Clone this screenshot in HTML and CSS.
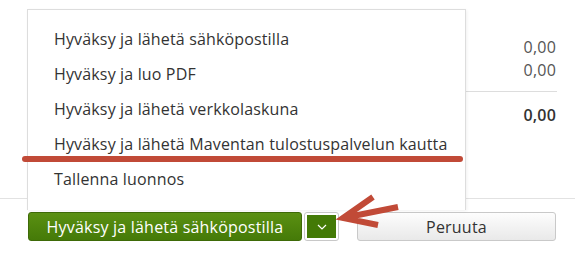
FILE: index.html
```html
<!DOCTYPE html>
<html lang="fi">
<head>
<meta charset="utf-8">
<title>Hyväksy</title>
<link rel="stylesheet" href="styles.css">
</head>
<body>
<div class="page">
  <div class="totals">
    <div class="row">0,00</div>
    <div class="row">0,00</div>
    <div class="sep"></div>
    <div class="row total">0,00</div>
  </div>
  <div class="footer">
    <div class="split">
      <button class="btn primary">Hyväksy ja lähetä sähköpostilla</button>
      <button class="btn caret"><span class="caret-inner"><svg width="10" height="6" viewBox="0 0 10 6"><path d="M1 1 L5 5 L9 1" fill="none" stroke="#fff" stroke-width="1.2"/></svg></span></button>
    </div>
    <button class="btn cancel">Peruuta</button>
  </div>
  <ul class="menu">
    <li>Hyväksy ja lähetä sähköpostilla</li>
    <li>Hyväksy ja luo PDF</li>
    <li>Hyväksy ja lähetä verkkolaskuna</li>
    <li>Hyväksy ja lähetä Maventan tulostuspalvelun kautta</li>
    <li>Tallenna luonnos</li>
  </ul>
  <svg class="annot" width="575" height="256" viewBox="0 0 575 256">
    <line x1="25" y1="159" x2="460" y2="159" stroke="#c14a37" stroke-width="6" stroke-linecap="round"/>
    <path d="M373 197 L343 218 L378 225 M343 218 L398 207" fill="none" stroke="#c14a37" stroke-width="6" stroke-linecap="butt" stroke-linejoin="miter"/>
  </svg>
</div>
</body>
</html>
```
FILE: styles.css
```css
html, body {
  margin: 0;
  padding: 0;
  background: #fff;
}
body {
  font-family: "Open Sans", "Noto Sans", sans-serif;
  color: #333;
}
.page {
  position: relative;
  width: 575px;
  height: 256px;
  overflow: hidden;
}
.totals {
  display: flex;
  flex-direction: column;
  align-items: flex-end;
  padding: 36px 19px 0 0;
  height: 163px;
  box-sizing: border-box;
}
.row {
  font-size: 16px;
  line-height: 23px;
  color: #555;
  letter-spacing: 0.2px;
}
.sep {
  width: 92px;
  height: 1px;
  background: #ddd;
  margin: 9px -1px 12px 0;
}
.total {
  font-weight: 600;
  color: #333;
}
.footer {
  border-top: 1px solid #e2e2e2;
  margin-top: 35px;
  display: flex;
  align-items: center;
  padding: 13px 0 0 28px;
  gap: 18px;
}
.split {
  display: flex;
  gap: 2px;
}
.btn {
  font-family: "Open Sans", "Noto Sans", sans-serif;
  font-size: 16px;
  letter-spacing: 0.2px;
  height: 29px;
  margin: 0;
  border-radius: 3px;
  cursor: pointer;
}
.primary {
  width: 274px;
  color: #fff;
  border: 1px solid #3e6a08;
  background: linear-gradient(#5a9012, #457a08);
  padding: 0;
}
.caret {
  width: 35px;
  padding: 2px;
  background: #fff;
  border: 1px solid #c8c8c8;
  display: flex;
}
.caret-inner {
  flex: 1;
  background: #437a06;
  display: flex;
  align-items: center;
  justify-content: center;
}
.cancel {
  width: 199px;
  color: #333;
  border: 1px solid #c9c9c9;
  background: linear-gradient(#fdfdfd, #e9e9e9);
  padding: 0;
}
.menu {
  position: absolute;
  left: 27px;
  top: 9px;
  width: 439px;
  height: 201px;
  box-sizing: border-box;
  margin: 0;
  padding: 12px 0 0 26px;
  list-style: none;
  background: #fff;
  border: 1px solid #ddd;
  border-bottom: none;
  box-shadow: 1px 1px 3px rgba(0,0,0,0.06);
}
.menu li {
  font-size: 16px;
  letter-spacing: 0.15px;
  line-height: 35px;
  color: #333;
  white-space: nowrap;
}
.annot {
  position: absolute;
  left: 0;
  top: 0;
  pointer-events: none;
}
```
